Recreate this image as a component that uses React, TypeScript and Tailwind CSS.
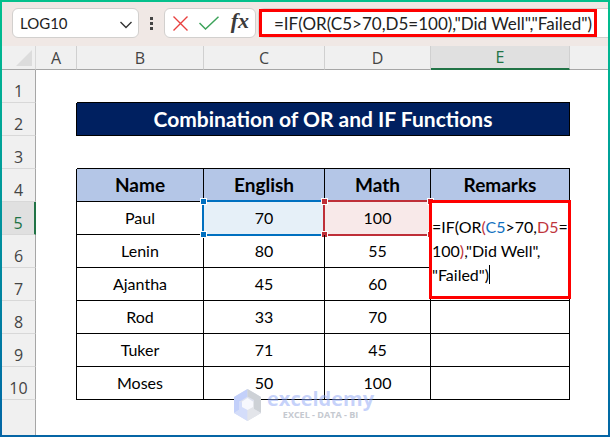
/**
 * Spreadsheet view with a formula bar, a marks table and
 * the in-cell editor open on E5.
 */

import { useState } from "react";
import clsx from "clsx";

interface Student {
  name: string;
  english: number;
  math: number;
}

const students: Student[] = [
  { name: "Paul", english: 70, math: 100 },
  { name: "Lenin", english: 80, math: 55 },
  { name: "Ajantha", english: 45, math: 60 },
  { name: "Rod", english: 33, math: 70 },
  { name: "Tuker", english: 71, math: 45 },
  { name: "Moses", english: 50, math: 100 },
];

const columns = ["A", "B", "C", "D", "E"];

// Shared cell styles
const cell = "border-b border-r border-black p-0 text-center";
const headCell = "border-b border-r border-black bg-[#b4c6e7] p-0 text-center text-[19px] font-bold";

function FormulaBar() {
  const [formula, setFormula] = useState('=IF(OR(C5>70,D5=100),"Did Well","Failed")');

  return (
    <div className="flex h-11 items-start bg-[#f0e8e5] pl-2.5 pt-1.5">
      {/* Name box */}
      <div className="flex h-[30px] w-[127px] shrink-0 items-center rounded-md border border-[#d2d0ce] bg-white pl-[7px] pr-1.5">
        <input
          aria-label="Name box"
          defaultValue="LOG10"
          className="w-full min-w-0 flex-1 text-[15px] text-[#222] outline-none"
        />
        <button aria-label="Open name list" className="shrink-0 pt-1">
          <svg width="12" height="8" viewBox="0 0 12 8" fill="none" stroke="#333" strokeWidth="1.4">
            <path d="M0.5 1 L6 6.5 L11.5 1" />
          </svg>
        </button>
      </div>

      <div className="flex h-[30px] w-[25px] shrink-0 flex-col items-center justify-center gap-0.5">
        <span className="size-[3px] bg-[#444]" />
        <span className="size-[3px] bg-[#444]" />
        <span className="size-[3px] bg-[#444]" />
      </div>

      {/* Cancel / enter / insert function */}
      <div className="flex h-[30px] w-[92px] shrink-0 items-center justify-between rounded-md border border-[#d2d0ce] bg-white pl-2 pr-1.5">
        <button aria-label="Cancel">
          <svg width="15" height="15" viewBox="0 0 15 15" fill="none" stroke="#e8403f" strokeWidth="1.4">
            <path d="M0.5 0.5 L14.5 14.5 M14.5 0.5 L0.5 14.5" />
          </svg>
        </button>
        <button aria-label="Enter">
          <svg width="20" height="14" viewBox="0 0 20 14" fill="none" stroke="#3da35a" strokeWidth="1.5">
            <path d="M0.5 7 L6.5 13 L19.5 0.8" />
          </svg>
        </button>
        <button
          aria-label="Insert function"
          className="pb-1 font-['Liberation_Serif',serif] text-[22px] leading-6 font-bold italic text-[#3b3b3b]"
        >
          fx
        </button>
      </div>

      {/* Formula input */}
      <div className="ml-0.5 flex h-[30px] min-w-0 flex-1 items-center rounded-l-md border border-r-0 border-[#d2d0ce] bg-white pr-[11px]">
        <input
          aria-label="Formula"
          value={formula}
          onChange={(e) => setFormula(e.target.value)}
          className="h-7 w-full min-w-0 border-3 border-[#fe0000] bg-white pl-3 text-[17px] text-[#222] outline-none"
        />
      </div>
    </div>
  );
}

// Coloured frame round a cell that the formula refers to
function RangeFrame({ color }: { color: "blue" | "red" }) {
  const handle = clsx(
    "absolute size-[7px] border border-white",
    color === "blue" ? "bg-[#0070c0]" : "bg-[#bf2f38]"
  );

  return (
    <span
      className={clsx(
        "absolute -top-0.5 -right-0.5 -bottom-0.5 -left-0.5 border-2",
        color === "blue" ? "border-[#0070c0]" : "border-[#bf2f38]"
      )}
    >
      <span className={clsx(handle, "-top-1 -left-1")} />
      <span className={clsx(handle, "-top-1 -right-1")} />
      <span className={clsx(handle, "-bottom-1 -left-1")} />
      <span className={clsx(handle, "-right-1 -bottom-1")} />
    </span>
  );
}

function CellEditor() {
  return (
    <div
      role="textbox"
      aria-label="Cell E5"
      className="absolute -top-0.5 -left-0.5 z-20 h-[99px] w-[142px] border-3 border-[#fe0000] bg-white pt-3 text-left text-[16px] leading-6 whitespace-nowrap"
    >
      =IF(OR<span className="text-[#c0353c]">(</span>
      <span className="text-[#1070c0]">C5</span>&gt;70,
      <span className="text-[#c0353c]">D5</span>=<br />
      100<span className="text-[#c0353c]">)</span>,"Did Well",
      <br />
      <span className="border-r border-black">"Failed")</span>
    </div>
  );
}

function RowNumber({ row }: { row: number }) {
  return (
    <th
      scope="row"
      className={clsx(
        "border-b border-[#d8d8d8] p-0 pt-2.5 text-center font-['Open_Sans',sans-serif] text-[16px] leading-5 font-normal",
        row === 5
          ? "border-r-2 border-r-[#217346] bg-[#e0e0e0] text-[#217346]"
          : "border-r border-r-[#a6a6a6] bg-[#f0f0f0] text-[#444]"
      )}
    >
      {row}
    </th>
  );
}

function Watermark() {
  return (
    <div className="pointer-events-none absolute top-[343px] left-[232px] z-10 flex items-center gap-1.5">
      <svg width="27" height="32" viewBox="0 0 27 32">
        <path d="M13.5 0 L27 8 L27 24 L13.5 32 L0 24 L0 8 Z" fill="#dde1ee" />
        <path d="M13.5 0 L0 8 L0 24 L5 21 L5 13 L13.5 7.5 Z" fill="#c3d0fa" />
        <path d="M13.5 0 L27 8 L27 24 L20 20 L20 11 L13.5 7.5 Z" fill="#cdd1d6" />
        <path d="M5 12 L13.5 16.5 L13.5 32 L0 24 L5 21 Z" fill="#d4ddfa" />
        <path d="M13.5 16.5 L20 12 L20 20 L27 24 L13.5 32 Z" fill="#e3e5ea" />
        <path d="M13.5 9 L19 12.5 L19 18 L13.5 21 L8 18 L8 12.5 Z" fill="#f7f8fd" />
      </svg>
      <div className="font-['Open_Sans',sans-serif] font-bold">
        <div className="text-[20px] leading-5 text-[#8ea6f5]/50">exceldemy</div>
        <div className="text-center text-[9px] leading-3 text-[#c5c9d0]">EXCEL - DATA - BI</div>
      </div>
    </div>
  );
}

function Sheet() {
  return (
    <div className="relative flex-1 bg-white">
      <table className="w-full table-fixed border-separate border-spacing-0 text-[16px] leading-6 text-black">
        <colgroup>
          <col className="w-[34px]" />
          <col className="w-[41px]" />
          <col className="w-[127px]" />
          <col className="w-[121px]" />
          <col className="w-[106px]" />
          <col className="w-[139px]" />
          <col />
        </colgroup>
        <thead>
          <tr className="h-6 bg-[#f0f0f0] font-['Open_Sans',sans-serif] text-[16px] leading-5 text-[#444]">
            <td className="border-r border-b border-r-[#d8d8d8] border-b-[#a6a6a6] p-0">
              <svg className="ml-auto mr-[3px]" width="16" height="16" viewBox="0 0 16 16">
                <path d="M16 0 L16 16 L0 16 Z" fill="#dcdcdc" />
              </svg>
            </td>
            {columns.map((col) => (
              <th
                key={col}
                scope="col"
                className={clsx(
                  "border-r border-r-[#d0d0d0] p-0 font-normal",
                  col === "E"
                    ? "border-b-2 border-b-[#217346] bg-[#e0e0e0] text-[#217346]"
                    : "border-b border-b-[#a6a6a6]"
                )}
              >
                {col}
              </th>
            ))}
            <td className="border-b border-[#a6a6a6] p-0" />
          </tr>
        </thead>
        <tbody>
          <tr className="h-[33px]">
            <RowNumber row={1} />
            <td />
            <td colSpan={4} className="border-b border-black" />
            <td />
          </tr>
          <tr className="h-[33px]">
            <RowNumber row={2} />
            <td className="border-r border-black" />
            <td colSpan={4} className={clsx(cell, "bg-[#002060] text-[21px] font-bold text-white")}>
              Combination of OR and IF Functions
            </td>
            <td />
          </tr>
          <tr className="h-[33px]">
            <RowNumber row={3} />
            <td />
            <td colSpan={4} className="border-b border-black" />
            <td />
          </tr>
          <tr className="h-[33px]">
            <RowNumber row={4} />
            <td className="border-r border-black" />
            <th className={headCell}>Name</th>
            <th className={headCell}>English</th>
            <th className={headCell}>Math</th>
            <th className={headCell}>Remarks</th>
            <td />
          </tr>
          {students.map((student, i) => {
            const active = i === 0;
            return (
              <tr key={student.name} className="h-[33px]">
                <RowNumber row={i + 5} />
                <td className="border-r border-black" />
                <td className={cell}>{student.name}</td>
                <td className={clsx(cell, "relative", active && "bg-[#e6f0f8]")}>
                  {student.english}
                  {active && <RangeFrame color="blue" />}
                </td>
                <td className={clsx(cell, "relative", active && "bg-[#f8e9e9]")}>
                  {student.math}
                  {active && <RangeFrame color="red" />}
                </td>
                <td className={clsx(cell, "relative")}>{active && <CellEditor />}</td>
                <td />
              </tr>
            );
          })}
          <tr className="h-[35px]">
            <td className="border-r border-[#a6a6a6] bg-[#f0f0f0]" />
            <td colSpan={6} />
          </tr>
        </tbody>
      </table>
      <Watermark />
    </div>
  );
}

export default function App() {
  return (
    <div className="min-h-screen bg-linear-to-b from-[#05c08c] to-[#0565a5] p-0.5 font-[Lato,sans-serif]">
      <div className="flex flex-col bg-white">
        <FormulaBar />
        <Sheet />
      </div>
    </div>
  );
}
